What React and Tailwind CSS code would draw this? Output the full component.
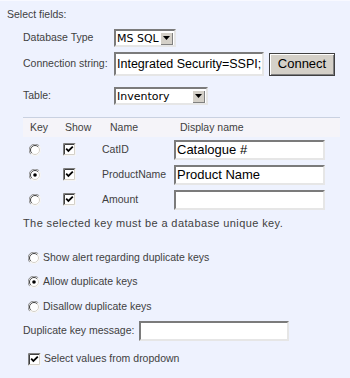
import React from 'react';

const sans = { fontFamily: '"Liberation Sans", Arial, sans-serif' };
const verdana = { fontFamily: '"DejaVu Sans", Verdana, sans-serif' };

function Radio({ checked }) {
  return (
    <svg width="12" height="12" viewBox="0 0 12 12" className="shrink-0">
      <circle cx="6" cy="6" r="5.5" fill="#fff" />
      <path d="M10.2 1.8 A5.5 5.5 0 0 0 1.8 10.2" fill="none" stroke="#8a8a8a" strokeWidth="1" />
      <path d="M9.2 2.8 A4.4 4.4 0 0 0 2.8 9.2" fill="none" stroke="#404040" strokeWidth="1" />
      <path d="M1.8 10.2 A5.5 5.5 0 0 0 10.2 1.8" fill="none" stroke="#f4f4f4" strokeWidth="1" />
      <path d="M2.8 9.2 A4.4 4.4 0 0 0 9.2 2.8" fill="none" stroke="#d4d0c8" strokeWidth="1" />
      {checked && <circle cx="6" cy="6" r="1.8" fill="#000" />}
    </svg>
  );
}

function Check() {
  return (
    <svg width="13" height="13" viewBox="0 0 13 13" className="shrink-0">
      <rect x="0" y="0" width="13" height="13" fill="#fff" />
      <path d="M0.5 12.5 V0.5 H12.5" fill="none" stroke="#808080" />
      <path d="M1.5 11.5 V1.5 H11.5" fill="none" stroke="#404040" />
      <path d="M0.5 12.5 H12.5 V0.5" fill="none" stroke="#f4f4f4" />
      <path d="M1.5 11.5 H11.5 V1.5" fill="none" stroke="#d4d0c8" />
      <path d="M3.2 5.6 L5.4 8 L9.8 3.6" fill="none" stroke="#000" strokeWidth="1.8" />
    </svg>
  );
}

function Inset({ className, children }) {
  return (
    <div className={'bg-white border-2 border-t-[#7b7b7b] border-l-[#7b7b7b] border-b-[#e6e6e6] border-r-[#e6e6e6] flex items-center overflow-hidden ' + className}>
      {children}
    </div>
  );
}

function Select({ value, width }) {
  return (
    <Inset className={width + ' h-[18px] justify-between pr-[1px]'}>
      <span style={verdana} className="text-[11px] text-black pl-[1px] leading-none whitespace-nowrap">{value}</span>
      <span className="w-[13px] h-[13px] bg-[#d4d0c8] shadow-[inset_1px_1px_0_#fff,inset_-1px_-1px_0_#808080] flex items-center justify-center">
        <svg width="7" height="4" viewBox="0 0 7 4"><path d="M0 0 H7 L3.5 4 Z" fill="#000" /></svg>
      </span>
    </Inset>
  );
}

function TextBox({ value, className, textSize }) {
  return (
    <Inset className={className}>
      <span style={sans} className={(textSize || 'text-[13px]') + ' text-black pl-[1px] whitespace-nowrap leading-none'}>{value}</span>
    </Inset>
  );
}

const fields = [
  { name: 'CatID', display: 'Catalogue #', key: false },
  { name: 'ProductName', display: 'Product Name', key: true },
  { name: 'Amount', display: '', key: false },
];

export default function App() {
  return (
    <div style={sans} className="w-[350px] h-[378px] bg-[#eef2fe] border-t border-[#f8f9ff] text-[10.5px] text-[#3f3f3f] overflow-hidden">
      <div className="pl-[7px] pt-[7px] leading-[13px]">Select fields:</div>
      <div className="pl-[23px]">
        <div className="flex items-center h-[18px] mt-[8px]">
          <span className="w-[91px]">Database Type</span>
          <Select value="MS SQL" width="w-[62px]" />
        </div>
        <div className="flex items-center h-[24px] mt-[5px]">
          <span className="w-[91px]">Connection string:</span>
          <TextBox value="Integrated Security=SSPI;" textSize="text-[12.5px]" className="w-[150px] h-[24px]" />
          <button className="ml-[5px] w-[66px] h-[23px] bg-[#d4d0c8] border border-[#404040] shadow-[inset_1px_1px_0_#fff,inset_-1px_-1px_0_#808080] text-[13px] text-black">Connect</button>
        </div>
        <div className="flex items-center h-[18px] mt-[11px]">
          <span className="w-[91px]">Table:</span>
          <Select value="Inventory" width="w-[94px]" />
        </div>

        <div className="w-[317px] mt-[12px] border-t border-[#c9d1e1]">
          <div className="flex items-center h-[19px] bg-[#f5f4f9]">
            <span className="w-[37px] pl-[7px]">Key</span>
            <span className="w-[40px] pl-[5px]">Show</span>
            <span className="w-[72px] pl-[10px]">Name</span>
            <span className="pl-[8px]">Display name</span>
          </div>
          {fields.map(function(f) {
            return (
              <div key={f.name} className="flex items-center h-[25px]">
                <span className="w-[37px] pl-[6px] flex"><Radio checked={f.key} /></span>
                <span className="w-[40px] pl-[3px] flex"><Check /></span>
                <span className="w-[72px] pl-[2px] whitespace-nowrap">{f.name}</span>
                <span className="pl-[2px]"><TextBox value={f.display} className="w-[151px] h-[20px]" /></span>
              </div>
            );
          })}
        </div>

        <div className="mt-[5px] leading-[13px] text-[11px] tracking-[0.4px]">The selected key must be a database unique key.</div>

        <div className="mt-[16px]">
          <div className="flex items-center h-[24px] pl-[5px] gap-[3px]"><Radio /><span>Show alert regarding duplicate keys</span></div>
          <div className="flex items-center h-[24px] pl-[5px] gap-[3px]"><Radio checked /><span>Allow duplicate keys</span></div>
          <div className="flex items-center h-[25px] pl-[5px] gap-[3px]"><Radio /><span>Disallow duplicate keys</span></div>
        </div>
        <div className="flex items-center h-[20px] mt-[2px]">
          <span className="w-[116px]">Duplicate key message:</span>
          <TextBox value="" className="w-[150px] h-[20px]" />
        </div>
        <div className="flex items-center h-[18px] mt-[9px] pl-[5px] gap-[3px]">
          <Check /><span>Select values from dropdown</span>
        </div>
      </div>
    </div>
  );
}
